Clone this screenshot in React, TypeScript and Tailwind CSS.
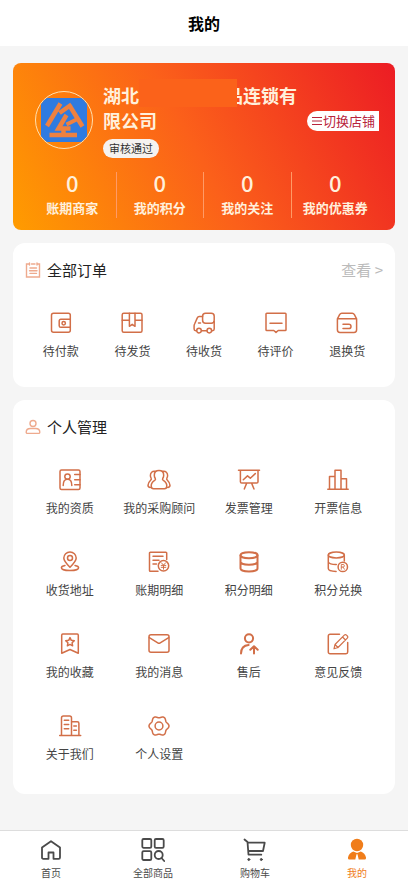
import type { ReactNode } from "react";
import clsx from "clsx";

type Item = {
  label: string;
  icon: ReactNode;
  bold?: boolean;
};

// Six-lobed outline of the settings gear
const gearPath =
  Array.from({ length: 72 }, (_, i) => {
    const a = (i * Math.PI) / 36;
    const r = 9.1 + 0.9 * Math.cos(6 * a);
    const x = (11 + r * Math.cos(a)).toFixed(2);
    const y = (11 + r * Math.sin(a)).toFixed(2);
    return `${i === 0 ? "M" : "L"}${x} ${y}`;
  }).join("") + "Z";

const stats = [
  { label: "账期商家", value: 0 },
  { label: "我的积分", value: 0 },
  { label: "我的关注", value: 0 },
  { label: "我的优惠券", value: 0 },
];

const orders: Item[] = [
  {
    label: "待付款",
    icon: (
      <>
        <rect x="1.5" y="1.3" width="18.8" height="19" rx="2" />
        <path d="M20.3 7.3H10.8a1.6 1.6 0 0 0-1.6 1.6v4.8a1.6 1.6 0 0 0 1.6 1.6h9.5" />
        <circle cx="13.7" cy="11.3" r="1.7" />
      </>
    ),
  },
  {
    label: "待发货",
    icon: (
      <>
        <rect x="1.2" y="1.3" width="19.8" height="19" rx="1.5" />
        <path d="M1.2 8.3h7.2M14 8.3h7M8.4 1.3v13l2.8-2 2.8 2v-13" />
      </>
    ),
  },
  {
    label: "待收货",
    icon: (
      <>
        <path d="M9.6 4.6H6.2c-1 0-1.6.5-1.9 1.3L1.6 12c-.4.7-.5 1.2-.5 2v3c0 1 .6 1.7 1.6 1.7h.8M8.6 18.7h5.2M18.8 18.7h.7c1 0 1.7-.7 1.7-1.7V9.5M5.5 11h2" />
        <rect x="9.6" y="1.3" width="11.6" height="10" rx="3" />
        <circle cx="6" cy="18.6" r="2.3" />
        <circle cx="16.3" cy="18.6" r="2.3" />
      </>
    ),
  },
  {
    label: "待评价",
    icon: (
      <path d="M1.8 1.3h18.4a.8.8 0 0 1 .8.8v15.6a.8.8 0 0 1-.8.8h-7L11 20.4l-2.2-1.9h-7a.8.8 0 0 1-.8-.8V2.1a.8.8 0 0 1 .8-.8ZM5 11.2h12" />
    ),
  },
  {
    label: "退换货",
    icon: (
      <path d="M1.4 6.8 3.6 2.7c.5-.9 1.1-1.4 2.2-1.4h10.4c1.1 0 1.7.5 2.2 1.4l2.2 4.1v11c0 1.5-1 2.6-2.6 2.6H4c-1.6 0-2.6-1.1-2.6-2.6ZM1.4 6.8h19.2M7 12.2h5.8a2.2 2.2 0 0 1 0 4.4H7" />
    ),
  },
];

const manage: Item[] = [
  {
    label: "我的资质",
    icon: (
      <>
        <rect x="1" y="1" width="20" height="19.5" rx="1.5" />
        <circle cx="8.5" cy="7.6" r="2.7" />
        <path d="M4.2 16.5c0-3.7 1.5-6.2 4.3-6.2s4.3 2.5 4.3 6.2M15.7 5.5H21M15.7 10.7H21M15.7 15.7H21" />
      </>
    ),
  },
  {
    label: "我的采购顾问",
    icon: (
      <>
        <path d="M11 1.5c2.9 0 4.7 2 4.7 4.7 0 1.5-.5 2.5-1 3.3-.4.8-.2 1.4.6 1.9 2.2 1.3 3.5 2.9 3.5 5.6 0 1.9-.9 2.8-2.4 2.8H5.600c-1.500 0-2.400-.9-2.400-2.800 0-2.700 1.300-4.300 3.500-5.600.8-.5 1-1.100.6-1.900-.5-.8-1-1.800-1-3.300 0-2.700 1.800-4.700 4.700-4.700Z" />
        <path d="M7.2 2.300C4.200 1.800 2.300 3.800 2.400 6.400c0 1.200.3 1.900.7 2.600.4.800.3 1.500-.5 2.200C1 12.700.1 14 0 16.200c0 1.300.9 2.100 2.300 2.200M14.800 2.300c3-.5 4.900 1.500 4.800 4.100 0 1.200-.3 1.900-.7 2.600-.4.800-.3 1.500.5 2.200 1.600 1.500 2.500 2.800 2.600 5 0 1.300-.9 2.100-2.300 2.200" />
      </>
    ),
  },
  {
    label: "发票管理",
    icon: (
      <path d="M.5 1.2h21M2.4 1.2v11.6c0 .8.5 1.3 1.3 1.3h15c.8 0 1.300-.5 1.300-1.300V1.200M8.700 14.100 6.300 20M13.600 14.100 16 20M5.300 10.700l4.200-3.800 2.800 2.300 5-4.600" />
    ),
  },
  {
    label: "开票信息",
    icon: (
      <path d="M.8 20.200h20.400M2.500 20.200V7.500H8M8 20.200V1.300h6v18.900M14 9.700h5.500v10.500" />
    ),
  },
  {
    label: "收货地址",
    icon: (
      <>
        <path d="M11 16.300c-3.300-3.200-6.200-6-6.200-9.200a6.200 6.200 0 0 1 12.400 0c0 3.200-2.900 6-6.200 9.200Z" />
        <circle cx="11" cy="7" r="2.5" />
        <path d="M6 14.500c-2.200.4-3.600 1.200-3.600 2.200 0 1.600 3.700 2.900 8.600 2.900s8.600-1.300 8.600-2.900c0-1-1.400-1.800-3.600-2.200" />
      </>
    ),
  },
  {
    label: "账期明细",
    icon: (
      <>
        <path d="M10 20.200H2.300a.8.8 0 0 1-.8-.8V2a.8.8 0 0 1 .8-.8h15.600a.8.8 0 0 1 .8.8v6.500M5 5.300h10M5 9.200h6M5 13h3.500" />
        <circle cx="15.5" cy="14.8" r="5.2" />
        <path d="m13.400 11.800 2.100 2.400 2.100-2.400M15.500 14.200v4M13.200 14.400h4.600M13.200 16.300h4.600" strokeWidth="1" />
      </>
    ),
  },
  {
    label: "积分明细",
    bold: true,
    icon: (
      <>
        <ellipse cx="11" cy="4.2" rx="8.5" ry="3" />
        <path d="M2.500 4.200v13.300c0 1.700 3.800 3 8.500 3s8.500-1.300 8.500-3V4.200M2.500 10.800c0 1.700 3.800 3 8.500 3s8.500-1.300 8.500-3" />
      </>
    ),
  },
  {
    label: "积分兑换",
    icon: (
      <>
        <ellipse cx="9.3" cy="4" rx="8" ry="2.9" />
        <path d="M1.300 4v13.500c0 1.500 3.200 2.800 7.800 2.900M17.300 4v6M1.300 10.800c0 1.700 3.800 2.900 8 2.800" />
        <circle cx="15.8" cy="15.9" r="4.7" />
        <path d="M14.300 18.300v-4.800h1.800a1.300 1.300 0 0 1 0 2.600h-1.800M16 16.100l1.500 2.200" strokeWidth="0.9" />
      </>
    ),
  },
  {
    label: "我的收藏",
    icon: (
      <>
        <path d="M2.700 20.300V2.200c0-.7.400-1.100 1.100-1.100h14.400c.7 0 1.100.4 1.100 1.100v18.100L11 16.500Z" />
        <path d="m11 4.600 1.300 2.700 3 .4-2.200 2.100.5 3-2.600-1.400-2.600 1.400.5-3-2.200-2.100 3-.4Z" />
      </>
    ),
  },
  {
    label: "我的消息",
    icon: (
      <>
        <rect x="1" y="1.8" width="20" height="17.5" rx="2" />
        <path d="m1.300 4.600 8.500 5.300c.8.500 1.600.5 2.400 0l8.500-5.300" />
      </>
    ),
  },
  {
    label: "售后",
    bold: true,
    icon: (
      <>
        <circle cx="11" cy="5.3" r="4.1" />
        <path d="M3 20.500c0-5 2.800-8.200 7.600-8.600M16 20.500v-7M12.300 16.800l3.700-3.600 3.700 3.600" />
      </>
    ),
  },
  {
    label: "意见反馈",
    icon: (
      <>
        <path d="M12.500 1.300H3A1.700 1.700 0 0 0 1.300 3v16A1.700 1.700 0 0 0 3 20.700h16a1.700 1.700 0 0 0 1.700-1.700V9.500" />
        <path d="m7 15.800 1-4.300 9.300-9.300c.7-.7 1.500-.7 2.200 0l.8.800c.7.700.7 1.500 0 2.200L11 14.500ZM15.500 4l3 3M8 11.500l3 3" strokeWidth="1.2" />
      </>
    ),
  },
  {
    label: "关于我们",
    icon: (
      <path d="M.7 20.500h21M2.500 20.500V3c0-1.200.7-1.900 1.900-1.900h6.200c1.200 0 1.900.7 1.900 1.900v17.500M12.500 6.700h5.800c1 0 1.600.6 1.600 1.600v12.200M5.300 5.300h4.400M5.300 9.500h4.400M5.300 13.700h4.400M14.800 11h2.600M14.800 15.200h2.600" />
    ),
  },
  {
    label: "个人设置",
    icon: (
      <>
        <path d={gearPath} />
        <circle cx="11" cy="11" r="3.9" />
      </>
    ),
  },
];

const tabs = [
  {
    label: "首页",
    icon: (
      <path d="M3 9.600 12 3.200l9 6.400v9.900c0 .8-.5 1.300-1.300 1.300h-5.200v-6.300h-5v6.300H4.300c-.8 0-1.300-.5-1.300-1.300Z" />
    ),
  },
  {
    label: "全部商品",
    icon: (
      <>
        <rect x="1.3" y="1" width="9" height="8.8" rx="1.3" />
        <rect x="13.7" y="1" width="9" height="8.800" rx="1.3" />
        <rect x="1.3" y="13.2" width="9" height="8.8" rx="1.3" />
        <circle cx="17.7" cy="17" r="4" />
        <path d="m20.500 20 2.700 3" />
      </>
    ),
  },
  {
    label: "购物车",
    icon: (
      <>
        <path d="M1.500 1.500 4.500 4l1 12.700h12.800M4.700 4.700h17L20 13H5.300" />
        <circle cx="5.8" cy="21.5" r="1" fill="currentColor" strokeWidth="1" />
        <circle cx="18.3" cy="21.5" r="1" fill="currentColor" strokeWidth="1" />
      </>
    ),
  },
  {
    label: "我的",
    active: true,
    icon: (
      <g fill="currentColor" stroke="none">
        <circle cx="12" cy="7" r="6.2" />
        <path d="M8.200 13.500 12 15l3.800-1.500c2.700 1.100 4.700 3.100 5.200 5.900.2 1.200-.4 2.100-1.600 2.100h-5.700l-1.200-5.300h-1l-1.200 5.300H4.600c-1.200 0-1.800-.9-1.600-2.100.5-2.800 2.500-4.800 5.200-5.900Z" />
      </g>
    ),
  },
];

function IconButton({ item }: { item: Item }) {
  return (
    <button type="button" className="flex flex-col items-center gap-[9px]">
      <svg
        viewBox="0 0 22 22"
        className="h-[22px] w-[22px] overflow-visible text-[#d26f48]"
        fill="none"
        stroke="currentColor"
        strokeWidth={item.bold ? 2 : 1.5}
        strokeLinecap="round"
        strokeLinejoin="round"
      >
        {item.icon}
      </svg>
      <span className="text-xs whitespace-nowrap text-[#444]">{item.label}</span>
    </button>
  );
}

function SectionTitle({ icon, title }: { icon: ReactNode; title: string }) {
  return (
    <div className="flex items-center gap-1.5">
      <svg
        viewBox="0 0 16 16"
        className="h-4 w-4 text-[#eeaa8e]"
        fill="none"
        stroke="currentColor"
        strokeWidth="1.4"
        strokeLinecap="round"
      >
        {icon}
      </svg>
      <h2 className="text-[15px] leading-5 text-[#222]">{title}</h2>
    </div>
  );
}

export default function App() {
  return (
    <div className="flex min-h-screen flex-col bg-[#f5f5f5] font-['Noto_Sans_CJK_SC',sans-serif]">
      <header className="flex h-[46px] items-center justify-center bg-white">
        <h1 className="text-base font-bold text-black">我的</h1>
      </header>

      <main className="flex flex-1 flex-col gap-[13px] px-[13px] pt-[17px] pb-9">
        {/* Shop card */}
        <section className="rounded-lg bg-linear-[62deg] from-[#ff9c00] via-[#fb601a] via-48% to-[#ec1c24] px-4 pt-5 pb-3 text-[#fff0dc]">
          <div className="flex items-start">
            <div className="mt-2 ml-1.5 flex h-[58px] w-[58px] shrink-0 items-center justify-center overflow-hidden rounded-full border border-[#ffe0b0]">
              <svg viewBox="0 0 46 44" className="h-11 w-[46px]">
                <rect width="46" height="44" fill="#2f7be0" />
                <g fill="none" stroke="#ee8140" strokeWidth="4.5">
                  <path d="M19.500 5.500 6 28M18.500 15 30.500 6.500M28.500 7.500 41.500 28.500M25.500 17 17.500 30.500h12M8.500 37h27.500M22.500 30.500V37" />
                  <path d="m37.500 20.500-12 6" strokeWidth="4" />
                </g>
              </svg>
            </div>

            <div className="ml-2.5 flex-1">
              <div className="text-lg leading-[25px] font-bold">
                <p className="flex">
                  <span className="whitespace-nowrap">湖北</span>
                  <span className="z-10 -mt-1 -mr-3 h-7 w-[98px] bg-[#fb621a]" />
                  <span className="whitespace-nowrap">品连锁有</span>
                </p>
                <p>限公司</p>
              </div>
              <span className="mt-1.5 flex h-[19px] w-14 items-center justify-center rounded-full bg-[#f5f2f0] text-[11px] text-[#333]">
                审核通过
              </span>
            </div>

            <button
              type="button"
              className="mt-7 -ml-20 flex h-5 w-[72px] shrink-0 items-center justify-center rounded-l-full bg-white text-[13px] whitespace-nowrap text-[#b8243c]"
            >
              <svg viewBox="0 0 12 12" className="h-3 w-3" stroke="currentColor" strokeWidth="1.2">
                <path d="M1 2.500h10M1 6h10M1 9.500h10" />
              </svg>
              切换店铺
            </button>
          </div>

          <div className="mt-3.5 grid grid-cols-4 divide-x divide-[#ff9a66]">
            {stats.map((s) => (
              <div key={s.label} className="flex flex-col items-center">
                <span className="text-[22px] leading-5 font-medium">{s.value}</span>
                <span className="mt-1.5 text-[13px] leading-5 font-bold whitespace-nowrap">{s.label}</span>
              </div>
            ))}
          </div>
        </section>

        {/* Orders */}
        <section className="rounded-xl bg-white px-3 pt-[17px] pb-7">
          <div className="flex items-center justify-between">
            <SectionTitle
              title="全部订单"
              icon={
                <path d="M4.500 2H1.500v13h13V2H12M6.500 2h3.500M4.500 1v2M12 1v2M5 6h6.500M4.500 8.700h7.500M5 11.400h6.500" />
              }
            />
            <a href="#orders" className="text-[15px] leading-5 text-[#bbb]">
              查看 &gt;
            </a>
          </div>
          <div className="mt-8 grid grid-cols-5">
            {orders.map((item) => (
              <IconButton key={item.label} item={item} />
            ))}
          </div>
        </section>

        {/* Personal */}
        <section className="rounded-xl bg-white px-3 pt-[17px] pb-8">
          <SectionTitle
            title="个人管理"
            icon={
              <>
                <circle cx="8" cy="4.5" r="3" />
                <path d="M1.200 13.200c0-2.300 2-3.700 4.300-3.700h5c2.300 0 4.300 1.400 4.300 3.700 0 .8-.4 1.200-1.200 1.200H2.400c-.8 0-1.200-.4-1.200-1.200Z" />
              </>
            }
          />
          <div className="mt-8 grid grid-cols-4 gap-y-[35px]">
            {manage.map((item) => (
              <IconButton key={item.label} item={item} />
            ))}
          </div>
        </section>
      </main>

      <nav className="sticky bottom-0 grid h-[53px] grid-cols-4 border-t border-[#ddd] bg-white">
        {tabs.map((tab) => (
          <a
            key={tab.label}
            href="#tab"
            className={clsx(
              "flex flex-col items-center gap-[3px] pt-[7px] text-[10px] leading-4",
              tab.active ? "text-[#f07d1a]" : "text-[#4a4a4a]"
            )}
          >
            <svg
              viewBox="0 0 24 24"
              className="h-6 w-6"
              fill="none"
              stroke="currentColor"
              strokeWidth="1.8"
              strokeLinecap="round"
              strokeLinejoin="round"
            >
              {tab.icon}
            </svg>
            {tab.label}
          </a>
        ))}
      </nav>
    </div>
  );
}
